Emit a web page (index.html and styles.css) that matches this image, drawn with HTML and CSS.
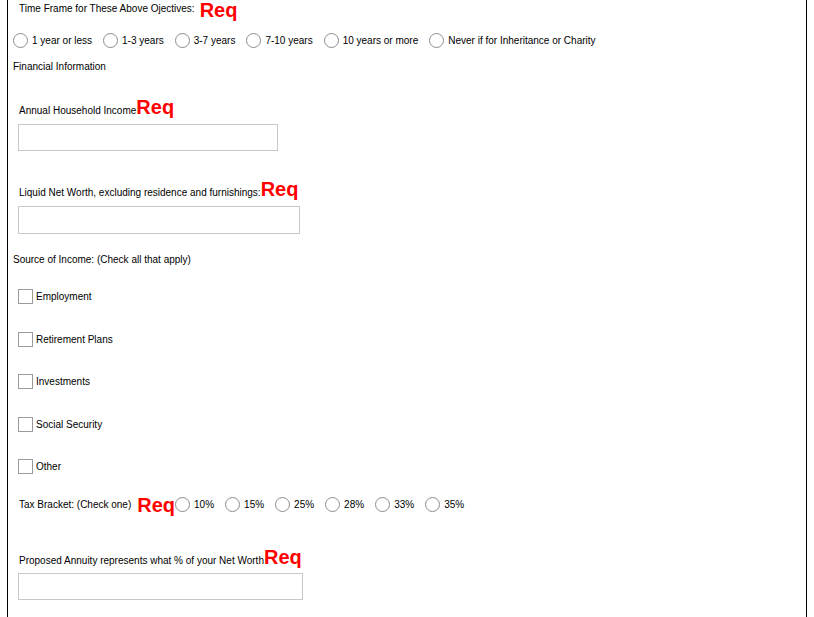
FILE: index.html
```html
<!DOCTYPE html>
<html>
<head>
<meta charset="utf-8">
<title>Financial Information</title>
<link rel="stylesheet" href="styles.css">
</head>
<body>
<div class="form">
  <div class="title-row">
    <span class="label">Time Frame for These Above Ojectives:</span>
    <span class="req">Req</span>
  </div>
  <div class="radio-row timeframe">
    <label class="opt"><input type="radio" name="tf"><span>1 year or less</span></label>
    <label class="opt"><input type="radio" name="tf"><span>1-3 years</span></label>
    <label class="opt"><input type="radio" name="tf"><span>3-7 years</span></label>
    <label class="opt"><input type="radio" name="tf"><span>7-10 years</span></label>
    <label class="opt"><input type="radio" name="tf"><span>10 years or more</span></label>
    <label class="opt"><input type="radio" name="tf"><span>Never if for Inheritance or Charity</span></label>
  </div>
  <div class="section">Financial Information</div>

  <div class="field-label first">Annual Household Income<span class="req">Req</span></div>
  <input class="text-input w260" type="text">

  <div class="field-label second">Liquid Net Worth, excluding residence and furnishings:<span class="req">Req</span></div>
  <input class="text-input w282" type="text">

  <div class="section source">Source of Income: (Check all that apply)</div>
  <div class="checks">
    <label class="check"><input type="checkbox"><span>Employment</span></label>
    <label class="check"><input type="checkbox"><span>Retirement Plans</span></label>
    <label class="check"><input type="checkbox"><span>Investments</span></label>
    <label class="check"><input type="checkbox"><span>Social Security</span></label>
    <label class="check"><input type="checkbox"><span>Other</span></label>
  </div>

  <div class="radio-row tax">
    <span class="label">Tax Bracket: (Check one)</span>
    <span class="req">Req</span>
    <label class="opt"><input type="radio" name="tax"><span>10%</span></label>
    <label class="opt"><input type="radio" name="tax"><span>15%</span></label>
    <label class="opt"><input type="radio" name="tax"><span>25%</span></label>
    <label class="opt"><input type="radio" name="tax"><span>28%</span></label>
    <label class="opt"><input type="radio" name="tax"><span>33%</span></label>
    <label class="opt"><input type="radio" name="tax"><span>35%</span></label>
  </div>

  <div class="field-label third">Proposed Annuity represents what % of your Net Worth<span class="req">Req</span></div>
  <input class="text-input w285" type="text">
</div>
</body>
</html>
```
FILE: styles.css
```css
html, body {
  margin: 0;
  padding: 0;
  background: #fff;
}
body {
  font-family: "Liberation Sans", Arial, sans-serif;
  font-size: 10px;
  color: #000;
}
.form {
  box-sizing: border-box;
  width: 800px;
  min-height: 617px;
  margin-left: 7px;
  border-left: 1px solid #000;
  border-right: 1px solid #000;
  padding-left: 5px;
  display: flex;
  flex-direction: column;
  align-items: flex-start;
}
.req {
  color: #ff0000;
  font-weight: bold;
  font-size: 20px;
  line-height: 20px;
}
.title-row {
  display: flex;
  align-items: center;
  height: 20px;
  padding-left: 6px;
  gap: 5px;
}
.title-row .label { margin-bottom: 3px; }
.title-row .req { margin-bottom: 1px; }
.radio-row {
  display: flex;
  align-items: center;
}
.timeframe {
  margin-top: 13px;
  height: 15px;
  gap: 11px;
}
.opt {
  display: flex;
  align-items: center;
  gap: 4px;
}
input[type="radio"] {
  appearance: none;
  -webkit-appearance: none;
  margin: 0;
  width: 15px;
  height: 15px;
  border: 1px solid #8d8d8d;
  border-radius: 50%;
  background: #fff;
  box-sizing: border-box;
}
.section {
  margin-top: 13px;
  line-height: 12px;
}
.field-label {
  padding-left: 6px;
  line-height: 20px;
}
.field-label.first { margin-top: 24px; }
.field-label.second { margin-top: 28px; }
.field-label.third { margin-top: 33px; }
.text-input {
  box-sizing: border-box;
  margin: 3px 0 0 5px;
  height: 27px;
  border: 1px solid #c8c8c8;
  padding: 0;
  background: #fff;
  outline: none;
}
.w260 { width: 260px; }
.w282 { width: 282px; height: 28px; }
.w285 { width: 285px; margin-top: 2px; }
.section.source { margin-top: 20px; }
.checks {
  display: flex;
  flex-direction: column;
  gap: 27.6px;
  margin-top: 23px;
  padding-left: 5px;
}
.check {
  display: flex;
  align-items: center;
  gap: 3px;
  height: 15px;
}
input[type="checkbox"] {
  appearance: none;
  -webkit-appearance: none;
  margin: 0;
  width: 15px;
  height: 15px;
  border: 1px solid #9a9a9a;
  background: #fff;
  box-sizing: border-box;
}
.tax {
  margin-top: 20px;
  height: 20px;
  padding-left: 6px;
  gap: 11px;
}
.tax .label { margin-right: -5px; }
.tax .req { margin-right: -11px; margin-top: 2px; }
```
